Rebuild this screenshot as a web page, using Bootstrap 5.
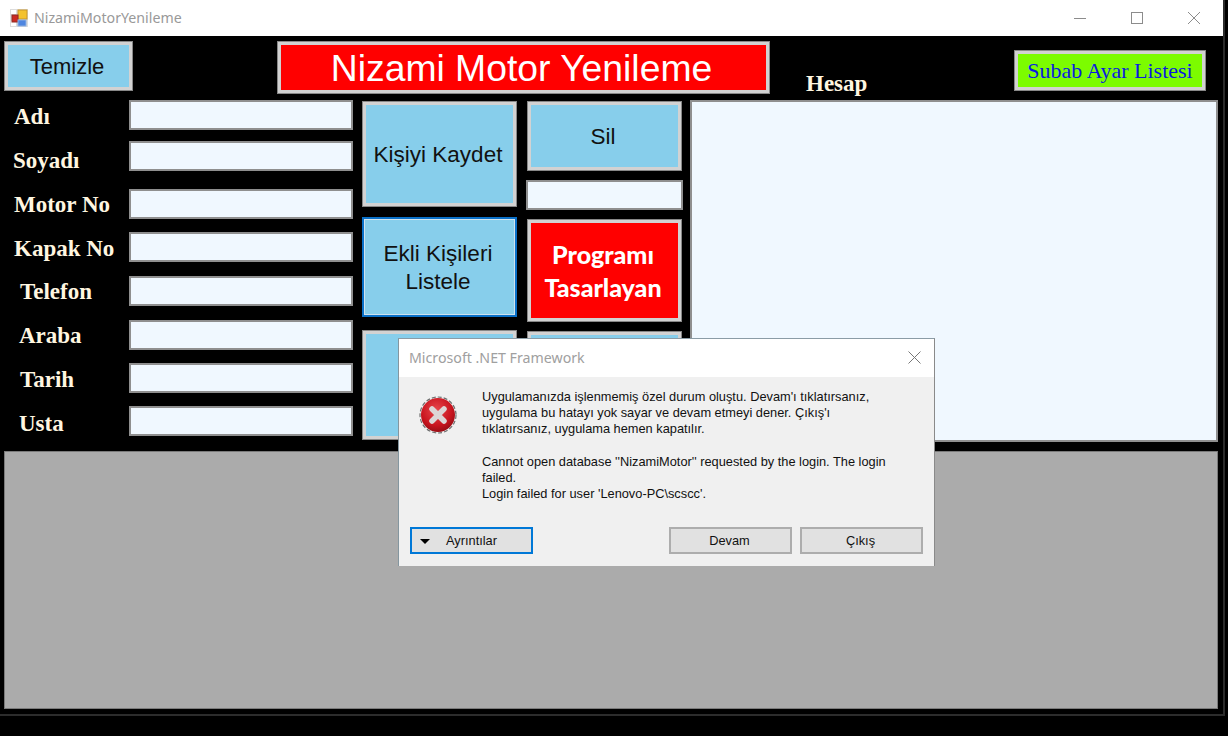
<!DOCTYPE html>
<html lang="tr">
<head>
  <meta charset="UTF-8" />
  <meta name="viewport" content="width=device-width, initial-scale=1" />
  <title>NizamiMotorYenileme</title>
  <link href="https://cdn.jsdelivr.net/npm/bootstrap@5.3.0/dist/css/bootstrap.min.css" rel="stylesheet" />
  <style>
    html, body { height: 100%; }
    body { background: #000; overflow: hidden; }
    .app-win { width: 1225px; height: 716px; border-right: 2px solid #2c2c2c; border-bottom: 2px solid #2c2c2c; }
    .title-bar { height: 36px; background: #fff; font-family: "Noto Sans", sans-serif; font-size: 14.2px; color: #999; padding-left: 10px; padding-right: 1px; }
    .title-bar .app-icon { margin-right: 6px; }
    .win-ctl { width: 57px; height: 36px; }

    .top-row { height: 64px; padding-top: 5px; padding-left: 4px; }
    .app-btn { border-radius: 0; border: 4px solid #d2d2d2; background: #87ceeb; color: #111; font-family: "Liberation Sans", sans-serif; font-size: 22.5px; line-height: 28px; padding: 2px 3px 0 0; width: 155px; outline: 1px solid #888; outline-offset: -1px; }
    .app-btn:hover { background: #87ceeb; color: #111; border-color: #d2d2d2; }
    .btn-clear { width: 129px; height: 50px; font-size: 22px; }
    .page-head { width: 493px; height: 53px; margin-left: 144px; border: 4px solid #d2d2d2; outline: 1px solid #888; outline-offset: -1px; background: #f00; color: #fff; font-family: "Liberation Sans", sans-serif; font-size: 37.3px; padding: 2px 4px 0 0; }
    .sum-label { margin-left: 36px; margin-top: 28px; width: 208px; font-size: 25px; line-height: 26px; height: 26px; padding-top: 0; }
    .btn-list { width: 192px; height: 41px; margin-top: 9px; background: #7cfc00; color: #0a1ae0; font-family: "Liberation Serif", serif; font-size: 22px; padding: 0; }
    .btn-list:hover { background: #7cfc00; color: #0a1ae0; }

    .main-row { height: 351px; }
    .fields { width: 353px; grid-template-columns: 129px 224px; grid-auto-rows: auto; align-content: start; align-items: start; }
    .fld-name { font-family: "Liberation Serif", serif; font-weight: 700; font-size: 23px; color: #fff6e0; line-height: 30px; height: 30px; white-space: nowrap; }
    .pl-a { padding-left: 14px; }
    .pl-b { padding-left: 13px; }
    .pl-c { padding-left: 20px; }
    .pl-d { padding-left: 19px; }
    .nudge-1 { padding-top: 1px; }
    .nudge-2 { padding-top: 2px; }
    .nudge-3 { padding-top: 3px; }
    .nudge-5 { padding-top: 5px; }
    .m-1x { margin-top: 11px; }
    .m-2x { margin-top: 18px; }
    .m-3x { margin-top: 13px; }
    .m-4x { margin-top: 14px; }
    .txt-box.form-control { border-radius: 0; border: 2px solid #8f8f8f; background: #f0f8ff; padding: 0; min-height: 0; box-shadow: none; }
    .txt-box.fld { height: 30px; }
    .btn-col-a { width: 155px; margin-left: 9px; padding-top: 1px; }
    .btn-col-b { width: 157px; margin-left: 9px; }
    .h-save { height: 106px; }
    .h-list { height: 100px; margin-top: 10px; border-color: #cfe3ee; outline: 2px solid #0a70c8; outline-offset: -2px; border-width: 3px; }
    .h-blank { height: 110px; margin-top: 13px; }
    .h-del { width: 155px; height: 70px; margin: 1px 0 0 1px; }
    .txt-mid { height: 30px; margin-top: 9px; }
    .h-author { width: 155px; height: 103px; margin: 9px 0 0 1px; background: #f00; color: #fff; font-family: "Lato", sans-serif; font-weight: 900; font-size: 25px; line-height: 33px; padding-top: 0; }
    .h-author:hover { background: #f00; color: #fff; }
    .h-blank2 { width: 155px; height: 110px; margin: 9px 0 0 1px; }
    .big-box.form-control { width: 528px; height: 342px; margin-left: 7px; resize: none; }

    .grid-box { width: 1214px; height: 258px; margin-left: 4px; background: #ababab; border: 1px solid #7a7a7a; }

    .err-dialog { left: 398px; top: 338px; width: 537px; height: 228px; border: 1px solid #84969f; border-top-color: #8b9ca6; border-right-color: #8a8a8a; border-bottom: 0; background: #f0f0f0; font-family: "Liberation Sans", sans-serif; font-size: 12.8px; color: #111; }
    .err-head { height: 38px; background: #fff; font-family: "Noto Sans", sans-serif; font-size: 14.2px; color: #a0a0a0; padding: 0 13px 1px 10px; }
    .err-body { padding: 12px 0 0 20px; height: 150px; }
    .err-icon { margin-top: 7px; flex-shrink: 0; }
    .err-msg { margin-left: 25px; line-height: 16.2px; white-space: nowrap; }
    .err-foot { padding: 0 11px 0 11px; }
    .dlg-btn { width: 123px; height: 27px; border-radius: 0; border: 2px solid #adadad; background: #e1e1e1; color: #111; font-size: 12.8px; line-height: 1; padding: 1px 2px 0 0; font-family: "Liberation Sans", sans-serif; }
    .dlg-btn:hover { background: #e1e1e1; color: #111; border-color: #adadad; }
    .dlg-btn.is-focus, .dlg-btn.is-focus:hover { border-color: #0078d7; }
    .caret-down { width: 0; height: 0; border-left: 5px solid transparent; border-right: 5px solid transparent; border-top: 5px solid #000; margin: 0 16px 0 8px; }
    .gap-8px { gap: 8px; }
  </style>
</head>
<body>
  <div class="app-win d-flex flex-column position-relative">
    <div class="title-bar d-flex align-items-center">
      <svg class="app-icon" width="18" height="18" viewBox="0 0 18 18">
        <rect x="0" y="0" width="18" height="18" fill="#dcdcdc"/>
        <rect x="1" y="12" width="5" height="5" fill="#fff"/>
        <rect x="1" y="1" width="5" height="4" fill="#fff"/>
        <rect x="8" y="1" width="9" height="9" fill="#f3c22f" stroke="#c9962a"/>
        <rect x="2" y="6" width="6" height="7" fill="#cc2a22" stroke="#8e2a24"/>
        <rect x="8" y="11" width="8" height="6" fill="#4f86e0" stroke="#8fb0e0"/>
      </svg>
      <span>NizamiMotorYenileme</span>
      <div class="ms-auto d-flex">
        <div class="win-ctl d-flex align-items-center justify-content-center">
          <svg width="12" height="12" viewBox="0 0 12 12"><path d="M0 6.5H12" stroke="#8c8c8c" fill="none"/></svg>
        </div>
        <div class="win-ctl d-flex align-items-center justify-content-center">
          <svg width="12" height="12" viewBox="0 0 12 12"><rect x=".5" y=".5" width="11" height="11" stroke="#8c8c8c" fill="none"/></svg>
        </div>
        <div class="win-ctl d-flex align-items-center justify-content-center">
          <svg width="12" height="12" viewBox="0 0 12 12"><path d="M0 0L12 12M12 0L0 12" stroke="#8c8c8c" fill="none"/></svg>
        </div>
      </div>
    </div>

    <div class="top-row d-flex align-items-start">
      <button type="button" class="btn app-btn btn-clear">Temizle</button>
      <div class="page-head d-flex align-items-center justify-content-center">Nizami Motor Yenileme</div>
      <div class="fld-name sum-label">Hesap</div>
      <button type="button" class="btn app-btn btn-list">Subab Ayar Listesi</button>
    </div>

    <div class="main-row d-flex align-items-start">
      <div class="fields d-grid">
        <div class="fld-name pl-a nudge-2">Adı</div>
        <input class="form-control txt-box fld" type="text" />
        <div class="fld-name pl-b nudge-5 m-1x">Soyadı</div>
        <input class="form-control txt-box fld m-1x" type="text" />
        <div class="fld-name pl-a nudge-1 m-2x">Motor No</div>
        <input class="form-control txt-box fld m-2x" type="text" />
        <div class="fld-name pl-a nudge-2 m-3x">Kapak No</div>
        <input class="form-control txt-box fld m-3x" type="text" />
        <div class="fld-name pl-c nudge-1 m-4x">Telefon</div>
        <input class="form-control txt-box fld m-4x" type="text" />
        <div class="fld-name pl-d nudge-1 m-4x">Araba</div>
        <input class="form-control txt-box fld m-4x" type="text" />
        <div class="fld-name pl-c nudge-2 m-3x">Tarih</div>
        <input class="form-control txt-box fld m-3x" type="text" />
        <div class="fld-name pl-d nudge-3 m-3x">Usta</div>
        <input class="form-control txt-box fld m-3x" type="text" />
      </div>

      <div class="btn-col-a d-flex flex-column">
        <button type="button" class="btn app-btn h-save">Kişiyi Kaydet</button>
        <button type="button" class="btn app-btn h-list">Ekli Kişileri<br />Listele</button>
        <button type="button" class="btn app-btn h-blank"></button>
      </div>

      <div class="btn-col-b d-flex flex-column">
        <button type="button" class="btn app-btn h-del">Sil</button>
        <input class="form-control txt-box txt-mid" type="text" />
        <button type="button" class="btn app-btn h-author">Programı<br />Tasarlayan</button>
        <button type="button" class="btn app-btn h-blank2"></button>
      </div>

      <textarea class="form-control txt-box big-box"></textarea>
    </div>

    <div class="grid-box"></div>

    <div class="err-dialog position-absolute d-flex flex-column">
      <div class="err-head d-flex align-items-center justify-content-between">
        <span>Microsoft .NET Framework</span>
        <svg width="13" height="13" viewBox="0 0 13 13"><path d="M.5 .5L12.5 12.5M12.5 .5L.5 12.5" stroke="#777" fill="none"/></svg>
      </div>
      <div class="err-body d-flex">
        <svg class="err-icon" width="38" height="38" viewBox="0 0 38 38">
          <defs>
            <radialGradient id="redFill" cx="45%" cy="35%" r="70%">
              <stop offset="0" stop-color="#e8474c"/>
              <stop offset="0.65" stop-color="#c8141e"/>
              <stop offset="1" stop-color="#8d0d14"/>
            </radialGradient>
          </defs>
          <circle cx="19" cy="19" r="17" fill="url(#redFill)"/>
          <circle cx="19" cy="19" r="18" fill="none" stroke="#6f6f6f" stroke-width="1.2" stroke-dasharray="4 2"/>
          <path d="M13 13L25 25M25 13L13 25" stroke="#dcd6d6" stroke-width="5.5" stroke-linecap="round"/>
        </svg>
        <div class="err-msg">
          Uygulamanızda işlenmemiş özel durum oluştu. Devam'ı tıklatırsanız,<br />
          uygulama bu hatayı yok sayar ve devam etmeyi dener. Çıkış'ı<br />
          tıklatırsanız, uygulama hemen kapatılır.<br />
          <br />
          Cannot open database ''NizamiMotor'' requested by the login. The login<br />
          failed.<br />
          Login failed for user 'Lenovo-PC\scscc'.
        </div>
      </div>
      <div class="err-foot d-flex">
        <button type="button" class="btn dlg-btn is-focus d-flex align-items-center"><span class="caret-down"></span>Ayrıntılar</button>
        <div class="ms-auto d-flex gap-8px">
          <button type="button" class="btn dlg-btn">Devam</button>
          <button type="button" class="btn dlg-btn">Çıkış</button>
        </div>
      </div>
    </div>
  </div>
  <script src="https://cdn.jsdelivr.net/npm/bootstrap@5.3.0/dist/js/bootstrap.bundle.min.js"></script>
</body>
</html>
